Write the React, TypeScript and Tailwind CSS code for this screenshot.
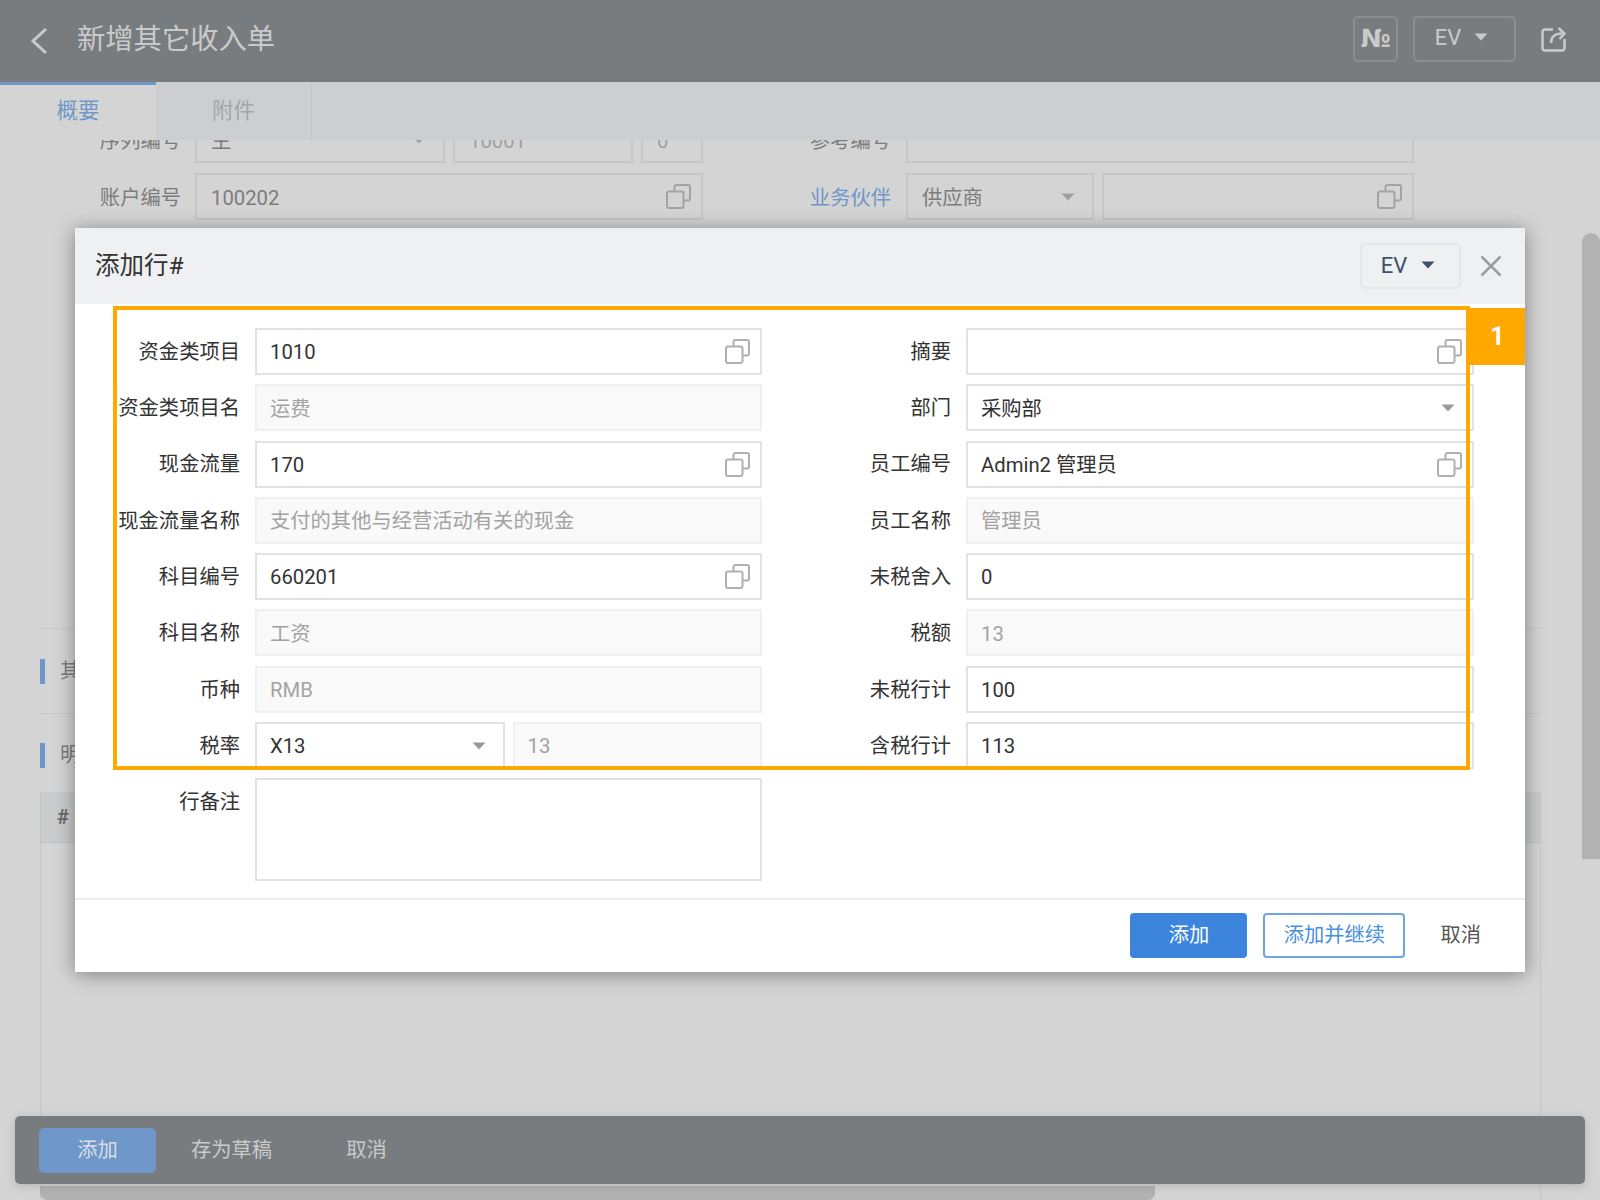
const CopyIcon = ({ className }: { className: string }) => (
  <svg viewBox="0 0 25 25" fill="none" stroke="currentColor" strokeWidth="2" className={className}>
    <path d="M8.500 7V3a2 2 0 0 1 2-2h11.500a2 2 0 0 1 2 2v11.500a2 2 0 0 1-2 2h-4.500" />
    <rect x="1" y="7.500" width="16.500" height="16.500" rx="2" />
  </svg>
);

const Caret = ({ className }: { className: string }) => (
  <svg viewBox="0 0 14 8" fill="currentColor" className={className}>
    <path d="M0.500 0.500h13L7 7.500z" />
  </svg>
);

type Field = {
  label: string;
  value?: string;
  disabled?: boolean;
  copy?: boolean;
  select?: boolean;
};

const leftFields: Field[] = [
  { label: "资金类项目", value: "1010", copy: true },
  { label: "资金类项目名", value: "运费", disabled: true },
  { label: "现金流量", value: "170", copy: true },
  { label: "现金流量名称", value: "支付的其他与经营活动有关的现金", disabled: true },
  { label: "科目编号", value: "660201", copy: true },
  { label: "科目名称", value: "工资", disabled: true },
  { label: "币种", value: "RMB", disabled: true },
];

const rightFields: Field[] = [
  { label: "摘要", copy: true },
  { label: "部门", value: "采购部", select: true },
  { label: "员工编号", value: "Admin2 管理员", copy: true },
  { label: "员工名称", value: "管理员", disabled: true },
  { label: "未税舍入", value: "0" },
  { label: "税额", value: "13", disabled: true },
  { label: "未税行计", value: "100" },
  { label: "含税行计", value: "113" },
];

const Box = ({ field, className = "flex-1" }: { field: Field; className?: string }) => (
  <div
    className={`flex h-[47px] items-center justify-between border-2 pl-[13px] pr-[10px] ${className} ${
      field.disabled
        ? "border-[#f0f0f0] bg-[#f9f9f9] text-[#a3a3a3]"
        : "border-[#e2e2e2] bg-white text-[#333333]"
    }`}
  >
    <span className="pt-[2px]">{field.value}</span>
    {field.copy && <CopyIcon className="h-[25px] w-[25px] text-[#b0b0b0]" />}
    {field.select && <Caret className="mr-[7px] h-[8px] w-[14px] text-[#999999]" />}
  </div>
);

const Row = ({ label, children }: { label: string; children: React.ReactNode }) => (
  <div className="flex h-[47px] items-center">
    <label className="w-[165px] shrink-0 pt-[1px] text-right text-[#333333]">{label}</label>
    <div className="ml-[15px] flex flex-1 gap-[8px]">{children}</div>
  </div>
);

const DimBox = ({ value, copy, select, className }: { value?: string; copy?: boolean; select?: boolean; className: string }) => (
  <div className={`flex h-[47px] items-center justify-between border-2 border-[#c6c6c6] pl-[14px] pr-[10px] text-[#7c7c7c] ${className}`}>
    <span className="pt-[3px]">{value}</span>
    {copy && <CopyIcon className="h-[25px] w-[25px] text-[#a3a3a3]" />}
    {select && <Caret className="mr-[7px] h-[8px] w-[14px] text-[#a0a0a0]" />}
  </div>
);

export default function App() {
  return (
    <div className="relative flex h-[1200px] w-[1600px] flex-col overflow-hidden bg-[#d4d4d4] font-['Roboto','Noto_Sans_CJK_SC',sans-serif] text-[20.300px]">
      {/* Header */}
      <header className="flex h-[82px] shrink-0 items-center bg-[#797c7e] pr-[33px] text-[#c9cacb]">
        <svg viewBox="0 0 18 28" fill="none" stroke="currentColor" strokeWidth="3" className="ml-[30px] h-[28px] w-[18px]">
          <path d="M16 2 3 14l13 12" />
        </svg>
        <h1 className="mb-[2px] ml-[29px] text-[28.300px] font-normal">新增其它收入单</h1>
        <div className="mb-[5px] ml-auto flex h-[46px] w-[45px] items-center justify-center rounded-[5px] border-2 border-[#8b8e90] font-['DejaVu_Sans'] text-[25px] font-bold">
          №
        </div>
        <div className="mb-[5px] ml-[15px] flex h-[46px] w-[103px] items-center justify-center gap-[13px] rounded-[5px] border-2 border-[#8b8e90] pb-[3px] pr-[6px] text-[22px]">
          EV
          <Caret className="h-[8px] w-[14px]" />
        </div>
        <svg viewBox="0 0 26 26" fill="none" stroke="currentColor" strokeWidth="2.500" className="mb-[5px] ml-[25px] h-[26px] w-[26px]">
          <path d="M12 3.500H4a2.500 2.500 0 0 0-2.500 2.500v16A2.500 2.500 0 0 0 4 24.500h17a2.500 2.500 0 0 0 2.500-2.500v-9" />
          <path d="M10 17c0-6 4-9.500 11-9.500" />
          <path d="m17.500 2 6 5.500-5 5.500" />
        </svg>
      </header>

      {/* Tabs */}
      <nav className="z-10 flex h-[58px] shrink-0 bg-[#cdced0] text-[21.500px]">
        <div className="flex w-[156px] items-center justify-center border-t-[3px] border-[#6f97c9] bg-[#d4d4d4] pb-[3px] text-[#6f97c9]">概要</div>
        <div className="flex w-[156px] items-center justify-center border-r border-[#c2c3c5] text-[#a5a5a5]">附件</div>
      </nav>

      {/* Dimmed form behind the dialog */}
      <main className="-mt-[24px] flex flex-1 flex-col px-[40px] text-[#7c7c7c]">
        <div className="flex flex-col gap-[10px]">
          <div className="flex items-center">
            <span className="w-[141px] pt-[3px] text-right">序列编号</span>
            <div className="ml-[14px] flex w-[508px] gap-[8px]">
              <DimBox value="主" select className="w-[250px]" />
              <DimBox value="10001" className="w-[180px] text-[#a0a0a0]" />
              <DimBox value="0" className="w-[62px] text-[#a0a0a0]" />
            </div>
            <span className="ml-[106px] w-[82px] pt-[3px] text-right">参考编号</span>
            <DimBox className="ml-[15px] w-[508px]" />
          </div>
          <div className="flex items-center">
            <span className="w-[141px] pt-[3px] text-right">账户编号</span>
            <DimBox value="100202" copy className="ml-[14px] w-[508px]" />
            <span className="ml-[106px] w-[82px] pt-[3px] text-right text-[#6f97c9]">业务伙伴</span>
            <div className="ml-[15px] flex w-[508px] gap-[8px]">
              <DimBox value="供应商" select className="w-[188px]" />
              <DimBox copy className="flex-1" />
            </div>
          </div>
        </div>

        <div className="mt-[408px] h-px w-[1501px] bg-[#c8c8c8]" />
        <div className="mt-[30px] h-[25px] border-l-[5px] border-[#6f97c9] pl-[15px] leading-[25px]">其它</div>
        <div className="mt-[29px] h-px w-[1501px] bg-[#c8c8c8]" />
        <div className="mt-[29px] h-[25px] border-l-[5px] border-[#6f97c9] pl-[15px] leading-[25px]">明细</div>
        <div className="mt-[24px] flex w-[1501px] flex-1 flex-col border-x border-[#c6c6c6]">
          <div className="flex h-[51px] items-center border-b border-[#c0c0c0] bg-[#cacbcd] pl-[16px] font-bold text-[#6b6b6b]">#</div>
        </div>
      </main>

      {/* Page scrollbars */}
      <div className="absolute right-0 top-[233px] h-[626px] w-[18px] rounded-t-[9px] bg-[#b2b2b2]" />
      <div className="absolute bottom-0 left-[40px] h-[14px] w-[1115px] rounded-b-[7px] bg-[#b2b2b2]" />

      {/* Bottom action bar */}
      <div className="absolute left-[15px] top-[1116px] flex h-[68px] w-[1570px] items-center rounded-[5px] bg-[#797c7e] pl-[24px] text-[#c9cacb] shadow-[0_2px_10px_rgba(0,0,0,0.15)]">
        <button className="h-[45px] w-[117px] rounded-[5px] bg-[#6f97c9] pt-[1px] text-[#d9dfe8]">添加</button>
        <button className="ml-[35px] pt-[1px]">存为草稿</button>
        <button className="ml-[74px] pt-[1px]">取消</button>
      </div>

      {/* Dialog */}
      <section className="absolute left-[75px] top-[228px] flex h-[744px] w-[1450px] flex-col bg-white shadow-[0_2px_18px_rgba(0,0,0,0.4)]">
        <div className="flex h-[76px] shrink-0 items-center bg-[#eff0f2] pl-[20px] pr-[23px]">
          <h2 className="text-[24.500px] font-normal text-[#333333]">添加行#</h2>
          <div className="ml-auto flex h-[46px] w-[101px] items-center justify-center gap-[14px] rounded-[5px] border-2 border-[#e4e6e9] pb-[2px] pr-[5px] text-[22px] text-[#41506a]">
            EV
            <Caret className="h-[8px] w-[14px]" />
          </div>
          <svg viewBox="0 0 22 22" fill="none" stroke="#9a9ea4" strokeWidth="2.500" className="ml-[19px] h-[22px] w-[22px]">
            <path d="m1.500 1.500 19 19M20.500 1.500l-19 19" />
          </svg>
        </div>

        <div className="relative flex flex-1 gap-[24px] pt-[24px]">
          <div className="flex w-[687px] flex-col gap-[9.300px]">
            {leftFields.map((f) => (
              <Row key={f.label} label={f.label}>
                <Box field={f} />
              </Row>
            ))}
            <Row label="税率">
              <Box field={{ label: "税率", value: "X13", select: true }} />
              <Box field={{ label: "税率值", value: "13", disabled: true }} />
            </Row>
            <div className="flex">
              <label className="mt-[9px] w-[165px] shrink-0 text-right text-[#333333]">行备注</label>
              <textarea className="ml-[15px] h-[103px] flex-1 resize-none border-2 border-[#e2e2e2] bg-white" />
            </div>
          </div>
          <div className="flex w-[688px] flex-col gap-[9.300px]">
            {rightFields.map((f) => (
              <Row key={f.label} label={f.label}>
                <Box field={f} />
              </Row>
            ))}
          </div>

          {/* Highlight annotation */}
          <div className="absolute left-[38px] top-[2px] h-[464px] w-[1357px] border-4 border-[#ffa800]" />
          <div className="absolute left-[1395px] top-[4px] flex h-[57px] w-[55px] items-center justify-center bg-[#ffa800] text-[25px] font-bold text-white">
            1
          </div>
        </div>

        <div className="flex h-[74px] shrink-0 items-center border-t-2 border-[#eeeeee] pb-[2px] pr-[44px]">
          <button className="ml-auto h-[45px] w-[117px] rounded-[4px] bg-[#3d85dc] text-white">添加</button>
          <button className="ml-[16px] h-[45px] w-[142px] rounded-[4px] border-2 border-[#6ea3e4] bg-white text-[#4a90e2]">添加并继续</button>
          <button className="ml-[35px] text-[#555555]">取消</button>
        </div>
      </section>
    </div>
  );
}
